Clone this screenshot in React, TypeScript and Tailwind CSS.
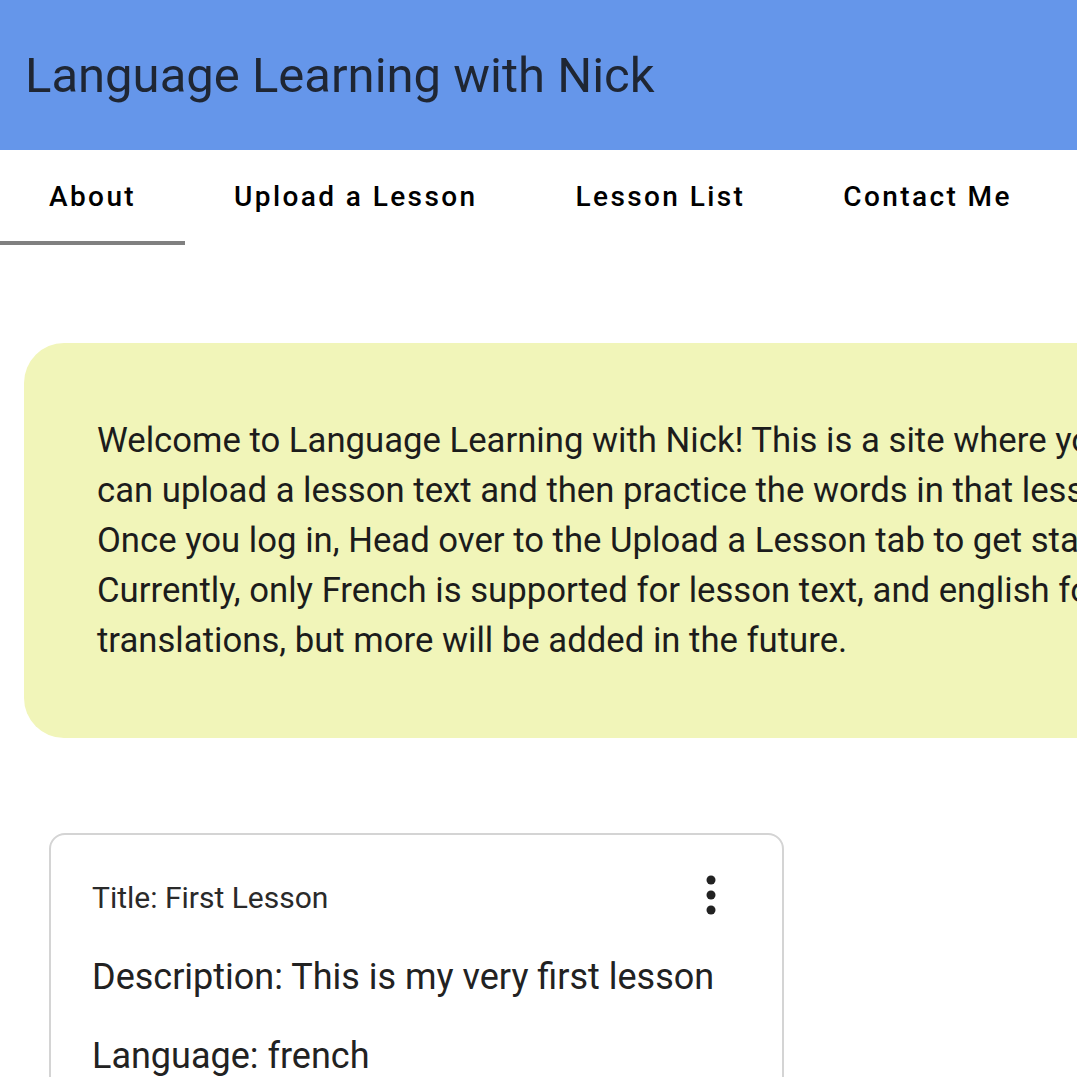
import React from 'react';

const tabs = ['About', 'Upload a Lesson', 'Lesson List', 'Contact Me'];

const welcomeLines = [
  'Welcome to Language Learning with Nick! This is a site where you',
  'can upload a lesson text and then practice the words in that lesson.',
  'Once you log in, Head over to the Upload a Lesson tab to get started.',
  'Currently, only French is supported for lesson text, and english for',
  'translations, but more will be added in the future.',
];

export default function App() {
  return (
    <div className="w-full min-h-screen overflow-hidden bg-white font-['Roboto',sans-serif] text-[#222]">
      <header className="h-[150px] bg-[#6596ea] flex items-center pl-[25px]">
        <h1 className="text-[49px] leading-none text-[#1f2633] whitespace-nowrap">Language Learning with Nick</h1>
      </header>

      <nav className="flex h-[95px]">
        {tabs.map((t, i) => (
          <div
            key={t}
            className="relative flex items-center px-[49px] pb-[2px] text-[28px] font-medium tracking-[2.4px] text-black whitespace-nowrap"
          >
            {t}
            {i === 0 && <span className="absolute left-0 right-0 bottom-0 h-[4px] bg-[#808080]" />}
          </div>
        ))}
      </nav>

      <section className="mt-[98px] ml-[24px] w-[1300px] rounded-[40px] bg-[#f1f5b9] px-[73px] pt-[72px] pb-[73px]">
        {welcomeLines.map((l) => (
          <p key={l} className="text-[34.7px] leading-[50px] whitespace-nowrap text-[#1c1c1c]">{l}</p>
        ))}
      </section>

      <div className="mt-[95px] ml-[49px] w-[735px] rounded-[16px] border-2 border-[#d4d4d4] px-[41px] pt-[36px] pb-[40px]">
        <div className="flex items-start justify-between">
          <p className="text-[30px] leading-[40px] text-[#2a2a2a] mt-[7px]">Title: First Lesson</p>
          <svg width="12" height="44" viewBox="0 0 12 44" className="mr-[24px] mt-[2px]">
            <circle cx="6" cy="7" r="4.5" fill="#222" />
            <circle cx="6" cy="22" r="4.5" fill="#222" />
            <circle cx="6" cy="37" r="4.5" fill="#222" />
          </svg>
        </div>
        <p className="mt-[35px] text-[36px] leading-[48px] text-[#222]">Description: This is my very first lesson</p>
        <p className="mt-[31px] text-[36px] leading-[48px] text-[#222]">Language: french</p>
      </div>
    </div>
  );
}
